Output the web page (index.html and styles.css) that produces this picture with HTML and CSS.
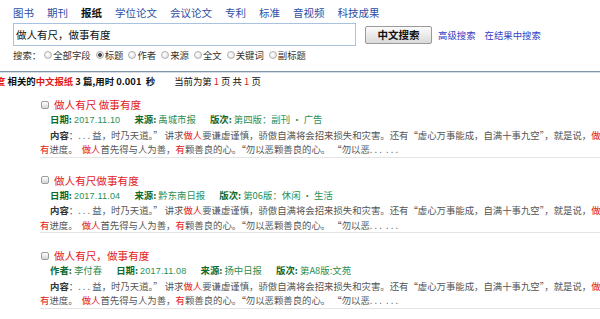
FILE: index.html
```html
<!DOCTYPE html>
<html lang="zh-CN">
<head>
  <meta charset="UTF-8" />
  <meta name="viewport" content="width=device-width, initial-scale=1.0"/>
  <title>报纸检索 - 做人有尺，做事有度</title>
  <link rel="stylesheet" href="styles.css">
</head>
<body>
  <!-- 顶部：资源类型 + 检索框 -->
  <div class="header">
    <ul class="nav">
      <li><a href="#">图书</a></li>
      <li><a href="#">期刊</a></li>
      <li class="current">报纸</li>
      <li><a href="#">学位论文</a></li>
      <li><a href="#">会议论文</a></li>
      <li><a href="#">专利</a></li>
      <li><a href="#">标准</a></li>
      <li><a href="#">音视频</a></li>
      <li><a href="#">科技成果</a></li>
    </ul>

    <form class="search-row" onsubmit="return false">
      <input class="search-box" type="text" value="做人有尺，做事有度" />
      <button class="btn-search" type="button">中文搜索</button>
      <a class="link-small" href="#">高级搜索</a>
      <a class="link-small" href="#">在结果中搜索</a>
    </form>

    <div class="field-row">
      <span>搜索：</span>
      <label class="field"><input type="radio" name="field" />全部字段</label>
      <label class="field"><input type="radio" name="field" checked />标题</label>
      <label class="field"><input type="radio" name="field" />作者</label>
      <label class="field"><input type="radio" name="field" />来源</label>
      <label class="field"><input type="radio" name="field" />全文</label>
      <label class="field"><input type="radio" name="field" />关键词</label>
      <label class="field"><input type="radio" name="field" />副标题</label>
    </div>
  </div>

  <div class="summary">
    <span class="kw-cut">度</span>
    <b>相关的<span class="red">中文报纸</span> 3 篇,用时 0.001&nbsp;&nbsp;秒</b>
    <span class="pager">当前为第 <span class="red">1</span> 页 共 <span class="red">1</span> 页</span>
  </div>

  <div class="results">
    <div class="result">
      <div class="result-title">
        <input type="checkbox" />
        <a href="#">做人有尺 做事有度</a>
      </div>
      <div class="meta">
        <span class="item"><b>日期:</b> <span class="date">2017.11.10</span></span>
        <span class="item"><b>来源:</b> 禹城市报</span>
        <span class="item"><b>版次:</b> 第四版：副刊 • 广告</span>
      </div>
      <p class="abstract"><b>内容</b>：. . . 益，时乃天道。” 讲求<em>做人</em>要谦虚谨慎，骄傲自满将会招来损失和灾害。还有“虚心万事能成，自满十事九空”，就是说，<em>做人</em>要<br><em>有</em>进度。&nbsp;&nbsp;<em>做人</em>首先得与人为善，<em>有</em>颗善良的心。“勿以恶颗善良的心。 “勿以恶. . .&nbsp;&nbsp;. . .</p>
    </div>

    <div class="result">
      <div class="result-title">
        <input type="checkbox" />
        <a href="#">做人有尺做事有度</a>
      </div>
      <div class="meta">
        <span class="item"><b>日期:</b> <span class="date">2017.11.04</span></span>
        <span class="item"><b>来源:</b> 黔东南日报</span>
        <span class="item"><b>版次:</b> 第06版：休闲 • 生活</span>
      </div>
      <p class="abstract"><b>内容</b>：. . . 益，时乃天道。” 讲求<em>做人</em>要谦虚谨慎，骄傲自满将会招来损失和灾害。还有“虚心万事能成，自满十事九空”，就是说，<em>做人</em>要<br><em>有</em>进度。&nbsp;&nbsp;<em>做人</em>首先得与人为善，<em>有</em>颗善良的心。“勿以恶颗善良的心。 “勿以恶. . .&nbsp;&nbsp;. . .</p>
    </div>

    <div class="result">
      <div class="result-title">
        <input type="checkbox" />
        <a href="#">做人有尺，做事有度</a>
      </div>
      <div class="meta">
        <span class="item"><b>作者:</b> 李付春</span>
        <span class="item"><b>日期:</b> <span class="date">2017.11.08</span></span>
        <span class="item"><b>来源:</b> 扬中日报</span>
        <span class="item"><b>版次:</b> 第A8版:文苑</span>
      </div>
      <p class="abstract"><b>内容</b>：. . . 益，时乃天道。” 讲求<em>做人</em>要谦虚谨慎，骄傲自满将会招来损失和灾害。还有“虚心万事能成，自满十事九空”，就是说，<em>做人</em>要<br><em>有</em>进度。&nbsp;&nbsp;<em>做人</em>首先得与人为善，<em>有</em>颗善良的心。“勿以恶颗善良的心。 “勿以恶. . .&nbsp;&nbsp;. . .</p>
    </div>
  </div>
</body>
</html>
```

FILE: styles.css
```css
body {
  margin: 0;
  font-family: "Noto Sans CJK SC", "Liberation Sans", sans-serif;
  font-size: 9.4px;
  color: #333;
  background: #fff;
  overflow: hidden;
}

a {
  text-decoration: none;
}

.red {
  color: #e31515;
}

/* 顶部 */
.header {
  padding: 5px 0 8px 13px;
  border-bottom: 1px solid #8494a8;
  box-shadow: 0 1px 0 #d5dde6;
}

.nav {
  list-style: none;
  margin: 0;
  padding: 0;
  display: flex;
  gap: 13px;
  font-size: 10.5px;
  line-height: 15px;
}
.nav a {
  color: #2d4fa5;
}
.nav .current {
  color: #111;
  font-weight: bold;
}

.search-row {
  display: flex;
  align-items: center;
  height: 23px;
  margin: 3px 0 0;
}
.search-box {
  width: 343px;
  height: 23px;
  box-sizing: border-box;
  margin: 0;
  padding: 0 2px;
  border: 1px solid #a9c2dd;
  font: 10.5px "Noto Sans CJK SC", sans-serif;
  color: #111;
  outline: none;
}
.btn-search {
  margin-left: 9px;
  width: 67px;
  height: 18px;
  padding: 0;
  border: 1px solid #9a9a9a;
  border-radius: 2px;
  background: linear-gradient(#fbfbfb, #dadada);
  font: bold 10.5px "Noto Sans CJK SC", sans-serif;
  color: #111;
  cursor: pointer;
}
.link-small {
  margin-left: 6px;
  color: #3440c4;
  font-size: 9.4px;
}
.link-small + .link-small {
  margin-left: 9px;
}

.field-row {
  display: flex;
  align-items: center;
  height: 16px;
  margin-top: 1px;
  color: #333;
}
.field {
  display: flex;
  align-items: center;
}
.field input {
  appearance: none;
  -webkit-appearance: none;
  box-sizing: border-box;
  width: 8px;
  height: 8px;
  margin: 0 1px 0 5px;
  border: 1px solid #b0b0b0;
  border-radius: 50%;
  background: radial-gradient(circle at 40% 40%, #fff, #dcdcdc);
}
.field:first-of-type input {
  margin-left: 3px;
}
.field input:checked {
  background: radial-gradient(circle, #4a4a4a 0 1.6px, #e6e6e6 2.2px);
}

/* 检索结果概要 */
.summary {
  margin-top: 2px;
  line-height: 14px;
  white-space: nowrap;
  color: #111;
}
.summary b {
  font-weight: bold;
}
.kw-cut {
  margin-left: -4px;
  color: #e31515;
  font-weight: bold;
}
.pager {
  margin-left: 17px;
}

/* 结果列表 */
.results {
  margin-top: 9px;
}
.result {
  margin: 0 0 15px 40px;
  border-bottom: 1px solid #e4e4e4;
  overflow: hidden;
}
.result-title {
  display: flex;
  align-items: center;
  height: 15px;
  font-size: 10.6px;
}
.result-title a {
  color: #e31b1b;
}
.result-title input {
  appearance: none;
  -webkit-appearance: none;
  box-sizing: border-box;
  width: 8px;
  height: 8px;
  margin: 0 5px 0 1px;
  border: 1px solid #9c9c9c;
  border-radius: 2px;
  background: linear-gradient(#fff, #d6d6d6);
}

.meta {
  padding-left: 10px;
  line-height: 14.5px;
  white-space: nowrap;
  color: #2b8f55;
}
.meta b {
  color: #0b6a2e;
}
.meta .item + .item {
  margin-left: 12px;
}
.meta .date {
  font-family: "Liberation Sans", sans-serif;
  font-size: 9px;
  letter-spacing: 0.2px;
}

.abstract {
  margin: 0;
  text-indent: 10px;
  line-height: 14.5px;
  white-space: nowrap;
  color: #555;
}
.abstract b {
  color: #333;
}
.abstract em {
  font-style: normal;
  color: #e31515;
}
```
